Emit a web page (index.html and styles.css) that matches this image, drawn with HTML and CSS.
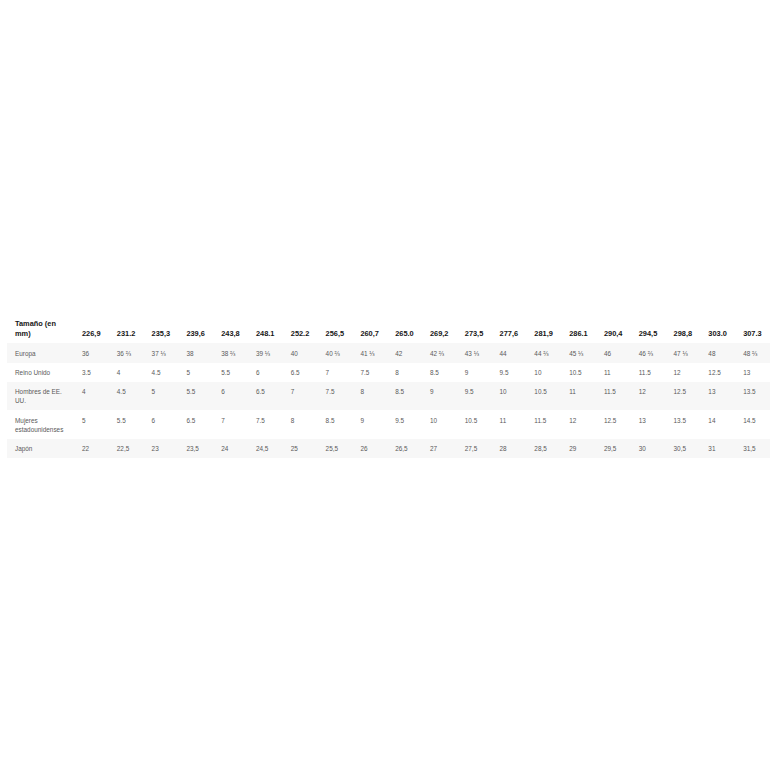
FILE: index.html
```html
<!DOCTYPE html>
<html lang="es">
<head>
<meta charset="utf-8">
<title>Tabla de tallas</title>
<link rel="stylesheet" href="styles.css">
</head>
<body>
<div class="page">
<table class="sizes">
<colgroup><col class="c-label"></colgroup>
<thead>
<tr><th class="label">Tamaño (en mm)</th><th>226,9</th><th>231.2</th><th>235,3</th><th>239,6</th><th>243,8</th><th>248.1</th><th>252.2</th><th>256,5</th><th>260,7</th><th>265.0</th><th>269,2</th><th>273,5</th><th>277,6</th><th>281,9</th><th>286.1</th><th>290,4</th><th>294,5</th><th>298,8</th><th>303.0</th><th>307.3</th></tr>
</thead>
<tbody>
<tr class="alt"><td>Europa</td><td>36</td><td>36 ⅔</td><td>37 ⅓</td><td>38</td><td>38 ⅔</td><td>39 ⅓</td><td>40</td><td>40 ⅔</td><td>41 ⅓</td><td>42</td><td>42 ⅔</td><td>43 ⅓</td><td>44</td><td>44 ⅔</td><td>45 ⅓</td><td>46</td><td>46 ⅔</td><td>47 ⅓</td><td>48</td><td>48 ⅔</td></tr>
<tr><td>Reino Unido</td><td>3.5</td><td>4</td><td>4.5</td><td>5</td><td>5.5</td><td>6</td><td>6.5</td><td>7</td><td>7.5</td><td>8</td><td>8.5</td><td>9</td><td>9.5</td><td>10</td><td>10.5</td><td>11</td><td>11.5</td><td>12</td><td>12.5</td><td>13</td></tr>
<tr class="alt"><td>Hombres de EE. UU.</td><td>4</td><td>4.5</td><td>5</td><td>5.5</td><td>6</td><td>6.5</td><td>7</td><td>7.5</td><td>8</td><td>8.5</td><td>9</td><td>9.5</td><td>10</td><td>10.5</td><td>11</td><td>11.5</td><td>12</td><td>12.5</td><td>13</td><td>13.5</td></tr>
<tr><td>Mujeres estadounidenses</td><td>5</td><td>5.5</td><td>6</td><td>6.5</td><td>7</td><td>7.5</td><td>8</td><td>8.5</td><td>9</td><td>9.5</td><td>10</td><td>10.5</td><td>11</td><td>11.5</td><td>12</td><td>12.5</td><td>13</td><td>13.5</td><td>14</td><td>14.5</td></tr>
<tr class="alt"><td>Japón</td><td>22</td><td>22,5</td><td>23</td><td>23,5</td><td>24</td><td>24,5</td><td>25</td><td>25,5</td><td>26</td><td>26,5</td><td>27</td><td>27,5</td><td>28</td><td>28,5</td><td>29</td><td>29,5</td><td>30</td><td>30,5</td><td>31</td><td>31,5</td></tr>
</tbody>
</table>
</div>
</body>
</html>
```
FILE: styles.css
```css
html, body {
  margin: 0;
  padding: 0;
  background: #ffffff;
}
.page {
  padding: 315px 7px 0 7px;
  font-family: "Liberation Sans", Arial, sans-serif;
}
.sizes {
  width: 763px;
  table-layout: fixed;
  border-collapse: collapse;
  border-spacing: 0;
}
.c-label {
  width: 67px;
}
.sizes th {
  font-size: 7.4px;
  line-height: 10.4px;
  font-weight: bold;
  color: #161616;
  text-align: left;
  vertical-align: bottom;
  padding: 4px 0 3.6px 8px;
  white-space: nowrap;
}
.sizes th.label {
  white-space: normal;
  padding-right: 8px;
}
.sizes td {
  font-size: 6.4px;
  line-height: 9px;
  color: #5a5a5a;
  text-align: left;
  vertical-align: top;
  padding: 5.3px 0 5px 8px;
  white-space: nowrap;
}
.sizes td:first-child {
  white-space: normal;
  padding-right: 8px;
}
.sizes tr.alt td {
  background: #f7f7f7;
}
```
